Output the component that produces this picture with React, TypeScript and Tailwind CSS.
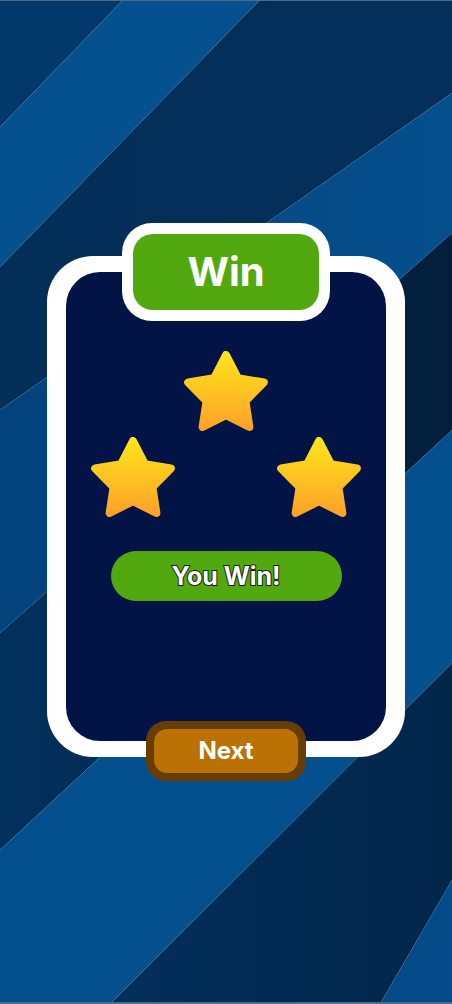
import React from "react";

function starPoints(cx: number, cy: number, R: number, r: number) {
  const pts: string[] = [];
  for (let i = 0; i < 10; i++) {
    const rad = i % 2 === 0 ? R : r;
    const a = (-90 + i * 36) * (Math.PI / 180);
    pts.push(`${(cx + rad * Math.cos(a)).toFixed(2)},${(cy + rad * Math.sin(a)).toFixed(2)}`);
  }
  return pts.join(" ");
}

function Star({ id }: { id: string }) {
  return (
    <svg width="84" height="80" viewBox="0 0 84 80.4" className="block">
      <defs>
        <linearGradient id={id} x1="0" y1="0" x2="0" y2="1">
          <stop offset="0" stopColor="#ffe31b" />
          <stop offset="1" stopColor="#fea329" />
        </linearGradient>
      </defs>
      <polygon
        points={starPoints(42, 44, 40, 20.5)}
        fill={`url(#${id})`}
        stroke={`url(#${id})`}
        strokeWidth="8"
        strokeLinejoin="round"
      />
    </svg>
  );
}

function Background() {
  return (
    <svg className="absolute inset-0 h-full w-full" viewBox="0 0 452 1004" preserveAspectRatio="none">
      <defs>
        <linearGradient id="bandC" x1="0" y1="0" x2="1" y2="0">
          <stop offset="0" stopColor="#03437c" />
          <stop offset="1" stopColor="#054f8d" />
        </linearGradient>
        <linearGradient id="bandD" x1="0" y1="0" x2="1" y2="0">
          <stop offset="0" stopColor="#02315d" />
          <stop offset="1" stopColor="#021e3b" />
        </linearGradient>
        <linearGradient id="bandB" x1="0" y1="0" x2="1" y2="0">
          <stop offset="0" stopColor="#022e58" />
          <stop offset="1" stopColor="#032f5a" />
        </linearGradient>
        <linearGradient id="bandF" x1="0" y1="0" x2="1" y2="0">
          <stop offset="0" stopColor="#022f5b" />
          <stop offset="1" stopColor="#02264a" />
        </linearGradient>
      </defs>
      <polygon points="0,0 123,0 0,127" fill="#03386a" />
      <polygon points="123,0 260,0 0,267 0,127" fill="#05508f" />
      <polygon points="260,0 452,0 452,93 0,410 0,267" fill="url(#bandB)" />
      <polygon points="452,93 452,233 0,633 0,410" fill="url(#bandC)" />
      <polygon points="452,233 452,430 0,850 0,633" fill="url(#bandD)" />
      <polygon points="452,430 452,663 110,1004 0,1004 0,850" fill="#04508e" />
      <polygon points="452,663 452,880 380,1004 110,1004" fill="url(#bandF)" />
      <polygon points="452,880 452,1004 380,1004" fill="#044a88" />
      <rect x="0" y="0" width="452" height="1" fill="#4d6a88" />
      <rect x="0" y="1002" width="452" height="2" fill="#4d6a88" />
    </svg>
  );
}

export default function App() {
  return (
    <div
      className="relative h-[1004px] w-full overflow-hidden"
      style={{ fontFamily: "Inter, 'Noto Sans', sans-serif" }}
    >
      <Background />
      <div className="relative flex h-full items-center justify-center">
        <div className="flex w-[358px] flex-col items-center">
          {/* Header */}
          <div className="relative z-10 rounded-[30px] bg-white p-[11px]">
            <div className="flex h-[76px] w-[186px] items-center justify-center rounded-[20px] bg-[#52a80f]">
              <span className="text-[40px] font-bold leading-none text-white">Win</span>
            </div>
          </div>
          {/* Card */}
          <div className="-mt-[65px] w-[358px] rounded-[46px] bg-white px-[19px] py-[16px]">
            <div className="flex h-[469px] flex-col items-center rounded-[34px] bg-[#021346] pt-[79px]">
              <Star id="s1" />
              <div className="mt-[6px] flex w-full justify-between px-[25px]">
                <Star id="s2" />
                <Star id="s3" />
              </div>
              <div className="mt-[34px] flex h-[50px] w-[231px] items-center justify-center rounded-full bg-[#52a80f]">
                <span className="text-[25px] font-bold leading-none text-white [-webkit-text-stroke:2px_#1a1a1a] [paint-order:stroke_fill]">
                  You Win!
                </span>
              </div>
            </div>
          </div>
          {/* Next button */}
          <div className="relative z-10 -mt-[36px] rounded-[20px] bg-[#683d02] p-[8px]">
            <div className="flex h-[44px] w-[144px] items-center justify-center rounded-[13px] bg-[#bb7104]">
              <span className="text-[24px] font-bold leading-none text-white">Next</span>
            </div>
          </div>
        </div>
      </div>
    </div>
  );
}
